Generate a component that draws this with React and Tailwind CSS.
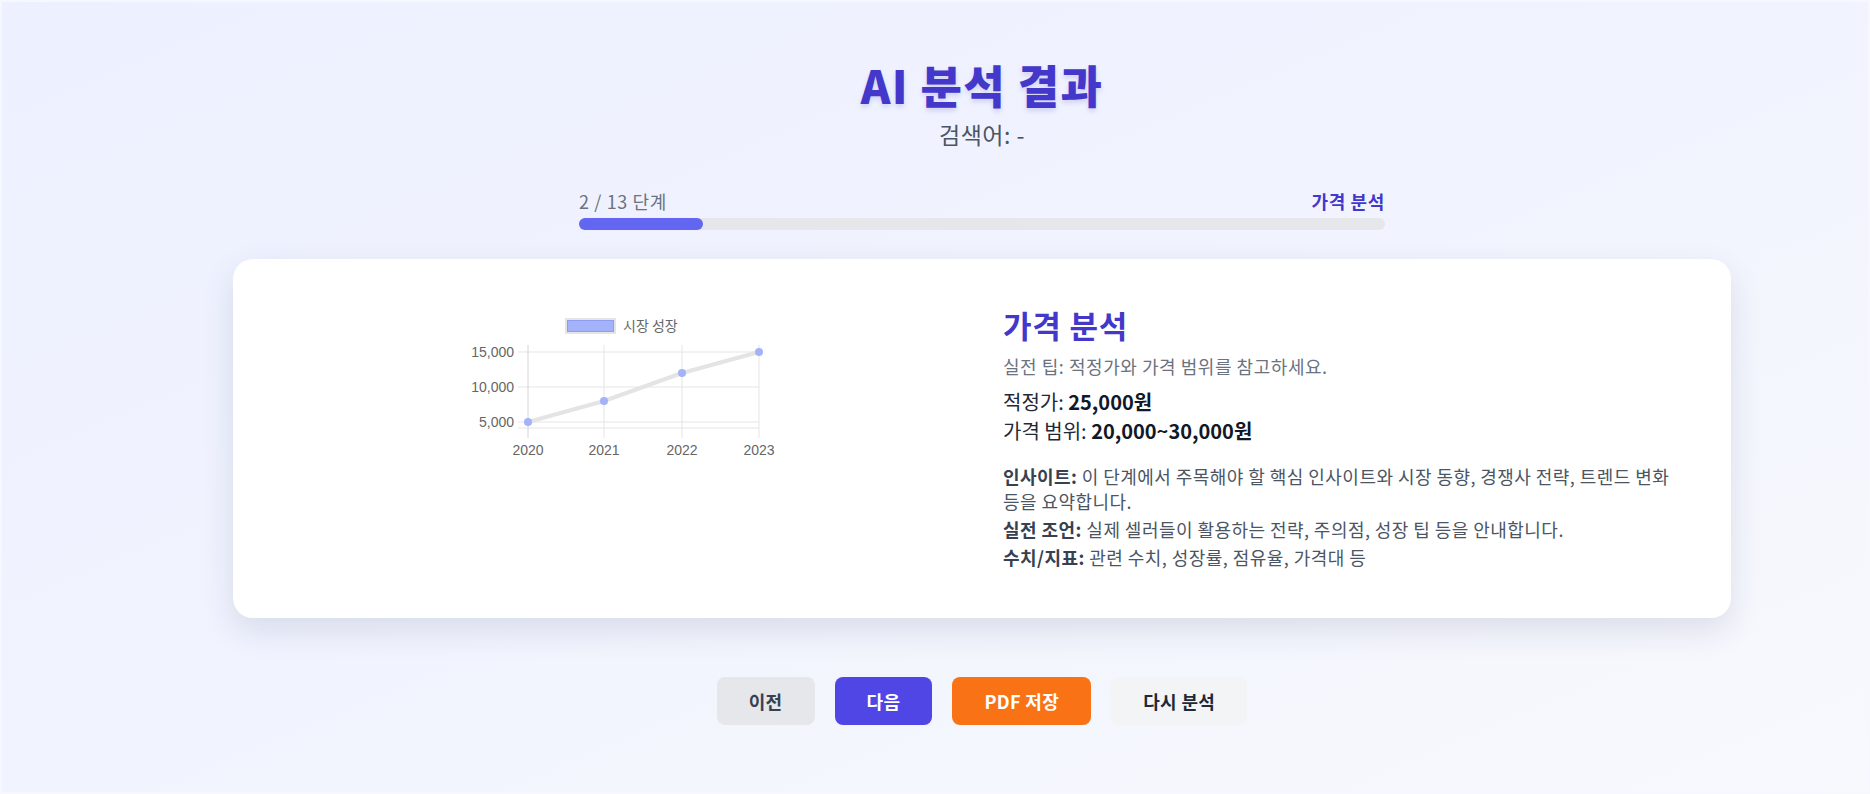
import React from 'react';

const points = [
    { year: '2020', x: 67, y: 115 },
    { year: '2021', x: 143, y: 94 },
    { year: '2022', x: 221, y: 66 },
    { year: '2023', x: 298, y: 45 },
];

const yTicks = [
    { label: '15,000', y: 45 },
    { label: '10,000', y: 80 },
    { label: '5,000', y: 115 },
];

function MarketChart() {
    return (
        <svg width="320" height="160" viewBox="0 0 320 160" className="mx-auto block">
            {/* legend */}
            <rect x="104" y="11" width="51" height="16" fill="#e5e5e5" />
            <rect x="106.5" y="13.5" width="46" height="11" fill="#a3b2f9" stroke="#8e9df0" strokeWidth="1" />
            <text x="162" y="24" fontSize="14" fill="#666" fontFamily="'Noto Sans CJK KR', sans-serif">시장 성장</text>

            {/* grid */}
            {yTicks.map((t) => (
                <line key={t.label} x1="57" x2="298" y1={t.y} y2={t.y} stroke="#e5e5e5" strokeWidth="1" />
            ))}
            <line x1="57" x2="298" y1="121" y2="121" stroke="#e5e5e5" strokeWidth="1" />
            {points.map((p) => (
                <line key={p.year} x1={p.x} x2={p.x} y1="38" y2="131" stroke={p.x === 67 ? '#d4d4d4' : '#e5e5e5'} strokeWidth="1" />
            ))}

            {/* labels */}
            {yTicks.map((t) => (
                <text key={t.label} x="53" y={t.y + 5} textAnchor="end" fontSize="14" fill="#666" fontFamily="'Liberation Sans', Arial, sans-serif">{t.label}</text>
            ))}
            {points.map((p) => (
                <text key={p.year} x={p.x} y="148" textAnchor="middle" fontSize="14" fill="#666" fontFamily="'Liberation Sans', Arial, sans-serif">{p.year}</text>
            ))}

            {/* line */}
            <polyline
                points={points.map((p) => `${p.x},${p.y}`).join(' ')}
                fill="none"
                stroke="#e4e4e4"
                strokeWidth="4"
                strokeLinejoin="round"
            />
            {points.map((p) => (
                <circle key={p.year} cx={p.x} cy={p.y} r="4" fill="#a3b2f9" />
            ))}
        </svg>
    );
}

function App() {
    return (
        <div className="min-h-screen bg-gradient-to-br from-[#edf0fe] via-[#f1f4fe] to-[#f8f9fd] border-2 border-[#f7f8ff] font-['Noto_Sans_CJK_KR','Noto_Sans',sans-serif]">
            <div className="pl-[231px] pr-[137px] pt-[58px] pb-16">
                {/* header */}
                <div className="text-center">
                    <h1 className="text-[45px] leading-[50px] tracking-[0.03em] font-extrabold text-[#4338ca] [text-shadow:0_3px_5px_rgba(67,56,202,0.18)]">
                        AI 분석 결과
                    </h1>
                    <p className="mt-[9px] text-[23px] leading-[30px] tracking-[0.02em] text-[#4b5563]">검색어: -</p>
                </div>

                {/* progress */}
                <div className="w-[806px] mx-auto mt-[40px]">
                    <div className="flex items-center justify-between text-[18px] leading-[24px] tracking-[0.035em]">
                        <span className="text-[#6b7280]">2 / 13 단계</span>
                        <span className="font-semibold text-[#4338ca]">가격 분석</span>
                    </div>
                    <div className="mt-[5px] h-3 w-full rounded-full bg-[#e5e7eb]">
                        <div className="h-3 rounded-full bg-[#6366f1]" style={{ width: `${(2 / 13) * 100}%` }} />
                    </div>
                </div>

                {/* card */}
                <div className="mt-[29px] bg-white rounded-[20px] shadow-[0_12px_32px_rgba(30,41,80,0.12)] p-12">
                    <div className="grid grid-cols-2 gap-[42px]">
                        <div>
                            <MarketChart />
                        </div>
                        <div>
                            <h2 className="text-[31px] leading-[36px] tracking-[0.025em] font-bold text-[#4338ca]">가격 분석</h2>
                            <p className="mt-[11px] text-[18px] leading-[24px] tracking-[0.03em] text-[#6b7280]">실전 팁: 적정가와 가격 범위를 참고하세요.</p>
                            <div className="mt-[9px] text-[20px] leading-[29px] text-[#1f2937]">
                                <div>적정가: <span className="font-bold text-[#111827]">25,000원</span></div>
                                <div>가격 범위: <span className="font-bold text-[#111827]">20,000~30,000원</span></div>
                            </div>
                            <div className="mt-[19px] text-[18px] leading-[25px] tracking-[0.025em] text-[#4b5563]">
                                <p>
                                    <span className="font-bold text-[#374151]">인사이트:</span> 이 단계에서 주목해야 할 핵심 인사이트와 시장 동향, 경쟁사 전략, 트렌드 변화 등을 요약합니다.
                                </p>
                                <p className="mt-[3px]">
                                    <span className="font-bold text-[#374151]">실전 조언:</span> 실제 셀러들이 활용하는 전략, 주의점, 성장 팁 등을 안내합니다.
                                </p>
                                <p className="mt-[3px]">
                                    <span className="font-bold text-[#374151]">수치/지표:</span> 관련 수치, 성장률, 점유율, 가격대 등
                                </p>
                            </div>
                        </div>
                    </div>
                </div>

                {/* actions */}
                <div className="mt-[59px] flex items-center justify-center gap-5">
                    <button className="h-12 px-8 rounded-lg bg-[#e5e7eb] text-[#374151] text-[18px] tracking-[0.02em] font-bold">이전</button>
                    <button className="h-12 px-8 rounded-lg bg-[#4f46e5] text-white text-[18px] tracking-[0.02em] font-bold">다음</button>
                    <button className="h-12 px-8 rounded-lg bg-[#f97316] text-white text-[18px] tracking-[0.02em] font-bold">PDF 저장</button>
                    <button className="h-12 px-8 rounded-lg bg-[#f3f4f6] text-[#1f2937] text-[18px] tracking-[0.02em] font-bold">다시 분석</button>
                </div>
            </div>
        </div>
    );
}

export default App;
